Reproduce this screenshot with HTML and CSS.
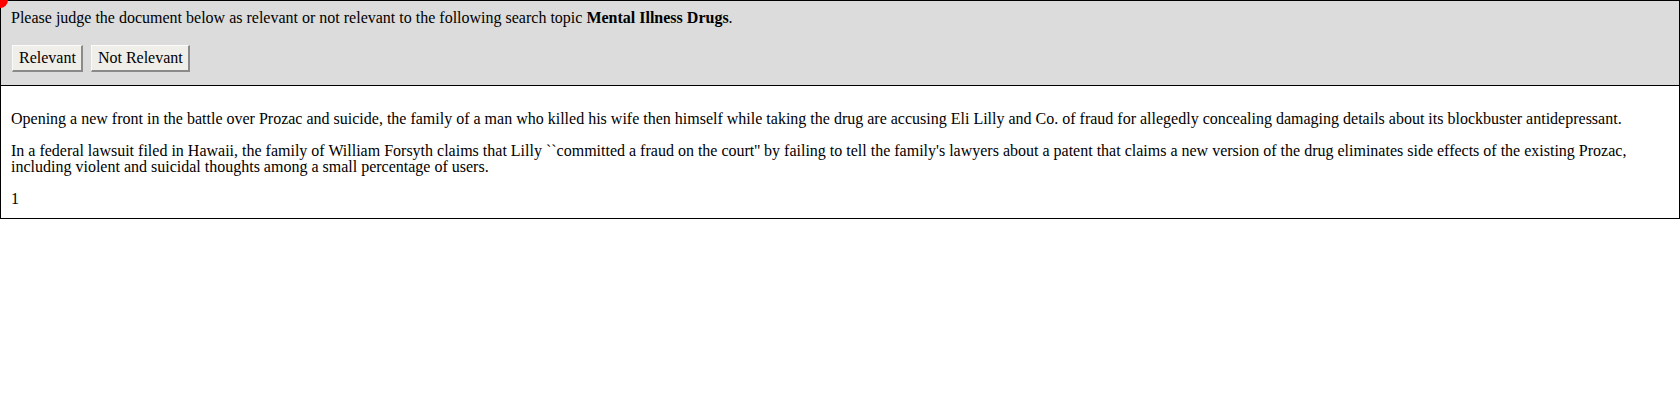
FILE: index.html
```html
<!DOCTYPE html>
<html>
<head>
<meta charset="utf-8">
<link rel="stylesheet" href="styles.css">
</head>
<body>
<div class="page">
  <span class="dot"></span>
  <div class="header">
    <div class="prompt">Please judge the document below as relevant or not relevant to the following search topic <b>Mental Illness Drugs</b>.</div>
    <div class="actions">
      <button class="btn">Relevant</button>
      <button class="btn">Not Relevant</button>
    </div>
  </div>
  <div class="doc">
    <p class="para">Opening a new front in the battle over Prozac and suicide, the family of a man who killed his wife then himself while taking the drug are accusing Eli Lilly and Co. of fraud for allegedly concealing damaging details about its blockbuster antidepressant.</p>
    <p class="para">In a federal lawsuit filed in Hawaii, the family of William Forsyth claims that Lilly ``committed a fraud on the court'' by failing to tell the family's lawyers about a patent that claims a new version of the drug eliminates side effects of the existing Prozac, including violent and suicidal thoughts among a small percentage of users.</p>
    <p class="para">1</p>
  </div>
</div>
</body>
</html>
```

FILE: styles.css
```css
html, body {
  margin: 0;
  padding: 0;
  background: #ffffff;
}
body {
  font-family: "Liberation Serif", "Times New Roman", serif;
  font-size: 16px;
  line-height: 16px;
  color: #000;
}
.page {
  position: relative;
  width: 1680px;
}
.dot {
  position: absolute;
  left: -8px;
  top: -8px;
  width: 16px;
  height: 16px;
  border-radius: 50%;
  background: #ff0000;
}
.header {
  background: #dcdcdc;
  border: 1px solid #000;
  padding: 9px 10px 13px 10px;
  display: flex;
  flex-direction: column;
  gap: 19px;
}
.actions {
  display: flex;
  gap: 7px;
}
.btn {
  font-family: "Liberation Serif", "Times New Roman", serif;
  font-size: 16px;
  line-height: 15px;
  color: #000;
  background: #f0eee9;
  border-style: solid;
  border-width: 1px 2px 2px 1px;
  border-color: #fbfbfb #8a8a8a #8a8a8a #fbfbfb;
  padding: 4px 5px 5px 6px;
  margin: 0 0 0 1px;
  height: 27px;
  border-radius: 0;
}
.doc {
  border: 1px solid #000;
  border-top: none;
  padding: 25px 10px 11px 10px;
  display: flex;
  flex-direction: column;
  gap: 16px;
}
.para {
  margin: 0;
}
```
